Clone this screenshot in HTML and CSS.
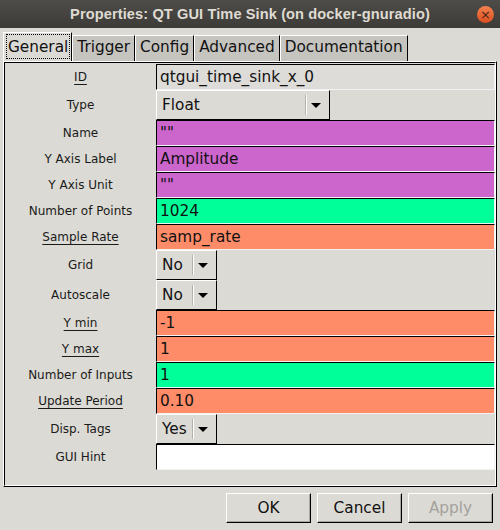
FILE: index.html
```html
<!DOCTYPE html>
<html>
<head>
<meta charset="utf-8">
<link rel="stylesheet" href="styles.css">
</head>
<body>
<div class="window">
  <header class="titlebar">
    <span class="title">Properties: QT GUI Time Sink (on docker-gnuradio)</span>
    <span class="close">&#215;</span>
  </header>
  <div class="notebook">
    <div class="tabs">
      <div class="tab selected"><span class="focus">General</span></div>
      <div class="tab">Trigger</div>
      <div class="tab">Config</div>
      <div class="tab">Advanced</div>
      <div class="tab">Documentation</div>
    </div>
    <div class="panel">
      <div class="panel-inner">
        <div class="label"><u>ID</u></div>
        <div class="entry readonly">qtgui_time_sink_x_0</div>

        <div class="label label-tall">Type</div>
        <div class="cell-tall"><div class="combo combo-wide"><span class="val">Float</span><span class="sep"></span><span class="arrow"></span></div></div>

        <div class="label">Name</div>
        <div class="entry string">""</div>

        <div class="label">Y Axis Label</div>
        <div class="entry string">Amplitude</div>

        <div class="label">Y Axis Unit</div>
        <div class="entry string">""</div>

        <div class="label">Number of Points</div>
        <div class="entry int">1024</div>

        <div class="label"><u>Sample Rate</u></div>
        <div class="entry float">samp_rate</div>

        <div class="label label-tall">Grid</div>
        <div class="cell-tall"><div class="combo combo-narrow"><span class="val">No</span><span class="sep"></span><span class="arrow"></span></div></div>

        <div class="label label-tall">Autoscale</div>
        <div class="cell-tall"><div class="combo combo-narrow"><span class="val">No</span><span class="sep"></span><span class="arrow"></span></div></div>

        <div class="label"><u>Y min</u></div>
        <div class="entry float">-1</div>

        <div class="label"><u>Y max</u></div>
        <div class="entry float">1</div>

        <div class="label">Number of Inputs</div>
        <div class="entry int">1</div>

        <div class="label"><u>Update Period</u></div>
        <div class="entry float">0.10</div>

        <div class="label label-tall">Disp. Tags</div>
        <div class="cell-tall"><div class="combo combo-narrow"><span class="val">Yes</span><span class="sep"></span><span class="arrow"></span></div></div>

        <div class="label">GUI Hint</div>
        <div class="entry plain"></div>
      </div>
    </div>
  </div>
  <footer class="buttons">
    <div class="button">OK</div>
    <div class="button">Cancel</div>
    <div class="button disabled">Apply</div>
  </footer>
</div>
</body>
</html>
```
FILE: styles.css
```css
html, body {
  margin: 0;
  padding: 0;
}
body {
  background: #dcdad5;
  font-family: "DejaVu Sans", sans-serif;
  color: #111;
}
.window {
  width: 500px;
  height: 530px;
  display: flex;
  flex-direction: column;
  overflow: hidden;
}
.titlebar {
  flex: none;
  height: 28px;
  background: linear-gradient(#4d4c48, #3c3b37);
  display: flex;
  align-items: center;
  justify-content: center;
  position: relative;
}
.title {
  font-family: "Liberation Sans", sans-serif;
  font-weight: bold;
  font-size: 14.6px;
  color: #dfdbd2;
  letter-spacing: 0.1px;
}
.close {
  position: absolute;
  right: 6px;
  top: 6px;
  width: 17px;
  height: 17px;
  border-radius: 50%;
  background: linear-gradient(#f3814f, #dc4f1f);
  color: #4a2414;
  font-family: "DejaVu Sans", sans-serif;
  font-size: 13px;
  line-height: 17px;
  text-align: center;
}
.notebook {
  flex: 1;
  display: flex;
  flex-direction: column;
  padding: 4px 3px 0 3px;
}
.tabs {
  flex: none;
  display: flex;
  align-items: flex-end;
  height: 29px;
}
.tab {
  box-sizing: border-box;
  height: 26px;
  padding: 0 4px;
  border-top: 1px solid #fff;
  border-left: 1px solid #fff;
  border-right: 1px solid #000;
  background: #c6c4bf;
  font-size: 15.3px;
  line-height: 23px;
}
.tab.selected {
  height: 29px;
  padding: 1px 1px 0 2px;
  background: #dcdad5;
}
.focus {
  display: block;
  box-sizing: border-box;
  height: 25px;
  border: 1px dotted #000;
  padding: 1px 1px 0 1px;
  line-height: 22px;
}
.panel {
  flex: 1;
  border: 1px solid;
  border-color: #fff #000 #000 #fff;
}
.panel-inner {
  box-sizing: border-box;
  height: 100%;
  border: 1px solid;
  border-color: #000 #fff #fff #000;
  padding-top: 1px;
  display: grid;
  grid-template-columns: 151px 1fr;
  align-content: start;
}
.label {
  height: 26px;
  display: flex;
  align-items: center;
  justify-content: center;
  font-size: 12px;
  color: #1a1a1a;
}
.label u {
  text-underline-offset: 3px;
}
.label-tall {
  height: 30px;
}
.entry {
  box-sizing: border-box;
  height: 26px;
  border: 1px solid;
  border-color: #000 #f2f2f2 #f2f2f2 #000;
  padding-left: 3px;
  font-size: 15.3px;
  line-height: 24px;
  color: #111;
  white-space: nowrap;
}
.readonly { background: #dddcd8; }
.string { background: #cc66cc; }
.int { background: #00ff99; }
.float { background: #ff8c69; }
.plain { background: #ffffff; }
.cell-tall {
  height: 30px;
}
.combo {
  box-sizing: border-box;
  height: 30px;
  border: 1px solid;
  border-color: #fff #000 #000 #fff;
  background: #dcdad5;
  display: flex;
  align-items: center;
  font-size: 15.3px;
}
.combo-wide { width: 174px; }
.combo-narrow { width: 61px; }
.val {
  flex: 1;
  padding-left: 5px;
  white-space: nowrap;
}
.sep {
  width: 1px;
  height: 20px;
  background: #fff;
  box-shadow: -1px 0 0 #b4b2ad;
}
.arrow {
  width: 0;
  height: 0;
  border-left: 5px solid transparent;
  border-right: 5px solid transparent;
  border-top: 5px solid #000;
  margin: 0 8px 0 4px;
}
.buttons {
  flex: none;
  display: flex;
  justify-content: flex-end;
  gap: 6px;
  padding: 6px 7px 7px 0;
}
.button {
  box-sizing: border-box;
  width: 85px;
  height: 30px;
  border: 1px solid;
  border-color: #fff #000 #000 #fff;
  box-shadow: inset -1px -1px 0 #a9a7a2;
  display: flex;
  align-items: center;
  justify-content: center;
  font-size: 15.3px;
  color: #111;
}
.button.disabled {
  color: #a3a19c;
}
```
